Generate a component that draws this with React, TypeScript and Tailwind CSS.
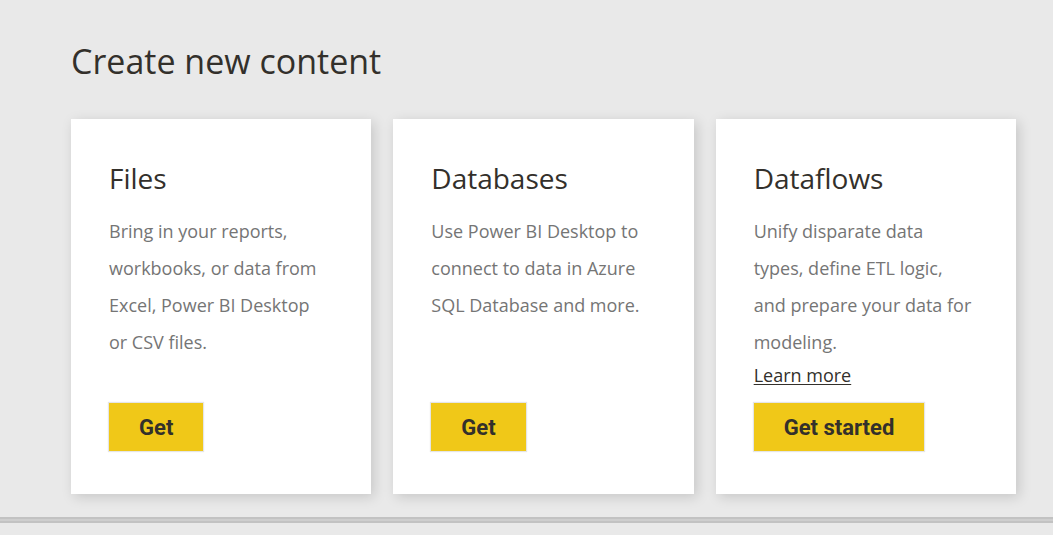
type Card = { title: string; body: string; action: string; link?: string };

const cards: Card[] = [
  {
    title: "Files",
    body: "Bring in your reports, workbooks, or data from Excel, Power BI Desktop or CSV files.",
    action: "Get",
  },
  {
    title: "Databases",
    body: "Use Power BI Desktop to connect to data in Azure SQL Database and more.",
    action: "Get",
  },
  {
    title: "Dataflows",
    body: "Unify disparate data types, define ETL logic, and prepare your data for modeling.",
    action: "Get started",
    link: "Learn more",
  },
];

function ContentCard({ title, body, action, link }: Card) {
  return (
    <article className="flex flex-col items-start bg-white pt-[39px] pr-[41px] pb-[43px] pl-[38px] shadow-[3px_3px_12px_rgba(0,0,0,0.15)]">
      <h2 className="text-[28px] leading-10 text-[#33302b]">{title}</h2>
      <p className="mt-[15px] text-[18px] leading-[37px] text-[#757575]">{body}</p>
      {link && (
        <a href="#learn-more" className="text-[18px] leading-7 text-[#33302b] underline underline-offset-2">
          {link}
        </a>
      )}
      <div className="mt-auto pt-3.5">
        <button type="button" className="h-12 bg-[#f0c818] px-[30px] font-['Roboto',sans-serif] text-[22px] font-bold text-[#33302b] shadow-[0_0_1px_1px_rgba(0,0,0,0.1)]">
          {action}
        </button>
      </div>
    </article>
  );
}

export default function App() {
  return (
    <div className="flex min-h-screen flex-col bg-[#e9e9e9] font-['Open_Sans','Noto_Sans',sans-serif]">
      <main className="pt-9 pr-[37px] pb-[23px] pl-[71px]">
        <h1 className="text-[34px] leading-[50px] text-[#33302b]">Create new content</h1>
        <div className="mt-[33px] grid grid-cols-3 gap-[22px]">
          {cards.map((card) => (
            <ContentCard key={card.title} {...card} />
          ))}
        </div>
      </main>
      <div className="h-1.5 border-y-2 border-[#c2c2c2] bg-[#cecece]" />
    </div>
  );
}
